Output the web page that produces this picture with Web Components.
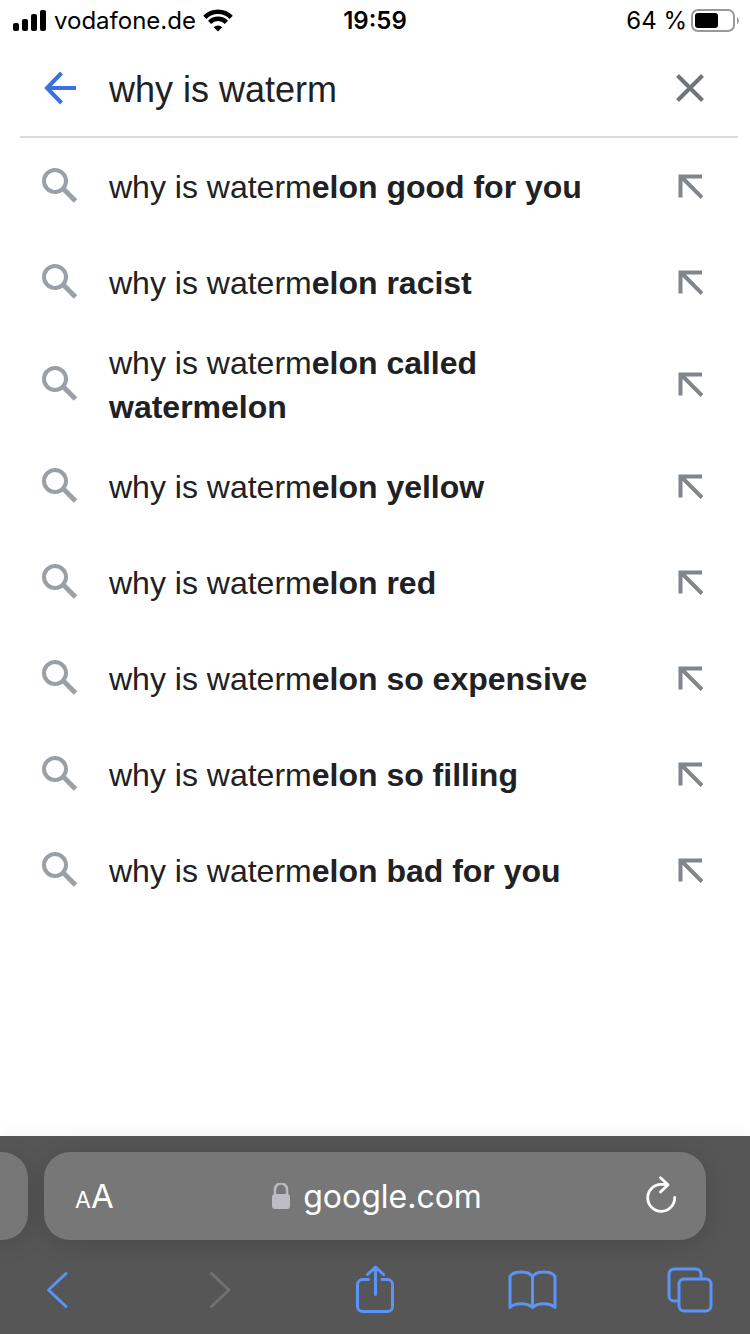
<!DOCTYPE html>
<html lang="en">
<head>
<meta charset="utf-8">
<meta name="viewport" content="width=device-width, initial-scale=1">
<title>why is waterm</title>
<style>
  body { margin: 0; background: #fff; color: #202124; font-family: "Liberation Sans", Arial, sans-serif; }
</style>
</head>
<body>
<phone-screen>
  <status-bar slot="top" carrier="vodafone.de" time="19:59" battery="64 %"></status-bar>
  <search-field slot="top" value="why is waterm"></search-field>
  <suggestion-row>why is waterm<b>elon good for you</b></suggestion-row>
  <suggestion-row>why is waterm<b>elon racist</b></suggestion-row>
  <suggestion-row>why is waterm<b>elon called</b> <b>watermelon</b></suggestion-row>
  <suggestion-row>why is waterm<b>elon yellow</b></suggestion-row>
  <suggestion-row>why is waterm<b>elon red</b></suggestion-row>
  <suggestion-row>why is waterm<b>elon so expensive</b></suggestion-row>
  <suggestion-row>why is waterm<b>elon so filling</b></suggestion-row>
  <suggestion-row>why is waterm<b>elon bad for you</b></suggestion-row>
  <browser-bar slot="bottom">google.com</browser-bar>
</phone-screen>

<script>
const RESET = `
  :host, * { box-sizing: border-box; }
  button { margin: 0; padding: 0; border: 0; background: none; color: inherit; font: inherit; display: flex; align-items: center; justify-content: center; }
  svg { display: block; flex: none; fill: none; }
`;

class BaseElement extends HTMLElement {
  constructor() {
    super();
    this.attachShadow({ mode: "open" });
  }
  connectedCallback() {
    this.shadowRoot.innerHTML = `<style>${RESET}${this.styles()}</style>${this.markup()}`;
  }
}

class PhoneScreen extends BaseElement {
  styles() { return `
    :host { display: flex; flex-direction: column; min-height: 100vh; }
    main { flex: 1; padding-top: 1px; }
  `; }
  markup() { return `
    <header><slot name="top"></slot></header>
    <main><slot></slot></main>
    <footer><slot name="bottom"></slot></footer>
  `; }
}

class StatusBar extends BaseElement {
  styles() { return `
    :host { display: grid; grid-template-columns: 1fr auto 1fr; align-items: center; height: 40px; padding: 2px 12px 0; color: #000; font: 24px/36px Inter, sans-serif; }
    div { display: flex; align-items: center; gap: 7px; }
    .right { justify-content: flex-end; gap: 4px; margin-right: -2px; }
    time { font-weight: 600; }
  `; }
  markup() { return `
    <div>
      <svg width="35" height="24" viewBox="0 0 35 24" style="fill:#000" aria-label="Signal strength">
        <rect x="1" y="14" width="6" height="8" rx="2"/><rect x="10" y="10" width="6" height="12" rx="2"/>
        <rect x="19" y="5" width="6" height="17" rx="2"/><rect x="28" y="1" width="6" height="21" rx="2"/>
      </svg>
      <span>${this.getAttribute("carrier")}</span>
      <svg width="30" height="24" viewBox="0 0 30 24" aria-label="Wi-Fi">
        <path d="M1.800 8.300a18.700 18.700 0 0 1 26.400 0" stroke="#000" stroke-width="4.500"/>
        <path d="M6.600 13.300a11.900 11.900 0 0 1 16.800 0" stroke="#000" stroke-width="4.500"/>
        <path d="M15 22.500l-4.300-4.300a6.100 6.100 0 0 1 8.600 0z" fill="#000"/>
      </svg>
    </div>
    <time>${this.getAttribute("time")}</time>
    <div class="right">
      <span>${this.getAttribute("battery")}</span>
      <svg width="49" height="24" viewBox="0 0 49 24" aria-label="Battery">
        <rect x="1" y="1" width="42" height="21" rx="6" stroke="#999" stroke-width="2"/>
        <rect x="4" y="4" width="23" height="15" rx="3" fill="#000"/>
        <path d="M46 8v7c2.500-1 2.500-6 0-7z" fill="#999"/>
      </svg>
    </div>
  `; }
}

class SearchField extends BaseElement {
  styles() { return `
    :host { display: block; padding: 0 12px 0 20px; }
    form { display: flex; height: 98px; border-bottom: 2px solid #dadce0; }
    .back { width: 80px; }
    .clear { width: 96px; }
    input { flex: 1; min-width: 0; margin: 4px 0 0; padding: 0 0 0 9px; border: 0; outline: 0; background: none; color: #202124; font: 36px/44px "Liberation Sans", Arial, sans-serif; }
  `; }
  markup() { return `
    <form role="search" onsubmit="return false">
      <button class="back" type="button" aria-label="Back">
        <svg width="34" height="34" viewBox="0 0 34 34"><path d="M18.500 2L4 17l14.500 15M4 17h29" stroke="#3871e0" stroke-width="4"/></svg>
      </button>
      <input type="text" aria-label="Search" value="${this.getAttribute("value")}">
      <button class="clear" type="button" aria-label="Clear">
        <svg width="30" height="30" viewBox="0 0 30 30"><path d="M2.500 2.500l25 25M27.500 2.500l-25 25" stroke="#70757a" stroke-width="4"/></svg>
      </button>
    </form>
  `; }
}

class SuggestionRow extends BaseElement {
  styles() { return `
    :host { display: flex; align-items: stretch; min-height: 96px; padding: 0 12px 0 20px; }
    a { flex: 1; min-width: 0; display: flex; align-items: center; color: inherit; text-decoration: none; }
    .icon { flex: none; width: 89px; padding-left: 20px; }
    .text { padding: 10px 0; font-size: 32px; line-height: 44px; }
    button { flex: none; width: 96px; }
  `; }
  markup() { return `
    <a href="#">
      <span class="icon"><svg width="38" height="40" viewBox="0 0 38 40">
        <circle cx="15" cy="14" r="11" stroke="#9aa0a6" stroke-width="4"/>
        <path d="M24 22.500L35.500 34" stroke="#9aa0a6" stroke-width="5"/>
      </svg></span>
      <span class="text"><slot></slot></span>
    </a>
    <button type="button" aria-label="Use this suggestion">
      <svg width="26" height="26" viewBox="0 0 26 26"><path d="M25 2.500H3.500V23.500M4.500 3L25 23.500" stroke="#80868b" stroke-width="4"/></svg>
    </button>
  `; }
}

class BrowserBar extends BaseElement {
  styles() { return `
    :host { display: block; background: #565656; color: #fff; font-family: Inter, sans-serif; box-shadow: 0 0 16px rgba(0,0,0,.06); }
    .tabs { display: grid; grid-template-columns: 28px 1fr; gap: 16px; padding: 16px 44px 0 0; }
    .previous, .address { height: 88px; background: #777; box-shadow: 0 4px 24px rgba(0,0,0,.14); }
    .previous { border-radius: 0 26px 26px 0; }
    .address { display: grid; grid-template-columns: 1fr auto 1fr; border-radius: 26px; padding: 0 28px 0 31px; }
    .size { justify-self: start; align-items: baseline; align-self: center; padding-top: 4px; font-size: 33px; line-height: 44px; }
    .size small { font-size: 23px; }
    .site { gap: 12px; font-size: 32px; line-height: 44px; padding-top: 2px; }
    .reload { justify-self: end; }
    nav { display: flex; justify-content: space-between; height: 94px; padding: 8px 28px 2px 26px; }
    nav button { width: 64px; }
    nav svg { stroke: #5b93f8; stroke-width: 3; stroke-linecap: round; stroke-linejoin: round; }
    nav button:disabled svg { stroke: #717171; }
  `; }
  markup() { return `
    <div class="tabs">
      <div class="previous"></div>
      <div class="address">
        <button class="size" type="button" aria-label="Page settings"><small>A</small><span>A</span></button>
        <button class="site" type="button">
          <svg width="20" height="28" viewBox="0 0 20 28"><path d="M4 12V6.500a6 6 0 0 1 12 0V12" stroke="#b9b9bf" stroke-width="2.500"/><rect x="1" y="11" width="18" height="15" rx="3" fill="#bcbcc2"/></svg>
          <span><slot></slot></span>
        </button>
        <button class="reload" type="button" aria-label="Reload">
          <svg width="34" height="40" viewBox="0 0 34 40" stroke="#fff" stroke-width="2.800" stroke-linecap="round" stroke-linejoin="round">
            <path d="M30.700 21.500A13.500 13.500 0 1 1 17 8.300h6M16.500 1.800L24 8.800l-7.500 7.200"/>
          </svg>
        </button>
      </div>
    </div>
    <nav aria-label="Browser">
      <button type="button" aria-label="Back"><svg width="24" height="40" viewBox="0 0 24 40"><path d="M20 3.500L2.500 20l17.500 16.500"/></svg></button>
      <button type="button" aria-label="Forward" disabled><svg width="32" height="40" viewBox="0 0 32 40"><path d="M11.500 3.500L29 20 11.500 36.500"/></svg></button>
      <button type="button" aria-label="Share"><svg width="40" height="50" viewBox="0 0 40 50"><path d="M14.500 14.500H8.500a5 5 0 0 0-5 5v22a5 5 0 0 0 5 5h25a5 5 0 0 0 5-5v-22a5 5 0 0 0-5-5H28M21.500 29.500V2M13.500 9.500l8-7.500 8 7.500"/></svg></button>
      <button type="button" aria-label="Bookmarks"><svg width="50" height="42" viewBox="0 0 50 42"><path d="M25.500 7.500C21.500 1.500 6.500 1.500 3 7.500v31c5-5 17-5 22.500 0 5.500-5 17-5 22.500 0v-31C44.500 1.500 29.500 1.500 25.500 7.500zM25.500 7.500v31"/></svg></button>
      <button type="button" aria-label="Tabs"><svg width="46" height="46" viewBox="0 0 46 46"><path d="M11 34H7a5 5 0 0 1-5-5V7a5 5 0 0 1 5-5h22a5 5 0 0 1 5 5v4"/><rect x="12" y="12" width="32" height="32" rx="5"/></svg></button>
    </nav>
  `; }
}

customElements.define("phone-screen", PhoneScreen);
customElements.define("status-bar", StatusBar);
customElements.define("search-field", SearchField);
customElements.define("suggestion-row", SuggestionRow);
customElements.define("browser-bar", BrowserBar);
</script>
</body>
</html>
